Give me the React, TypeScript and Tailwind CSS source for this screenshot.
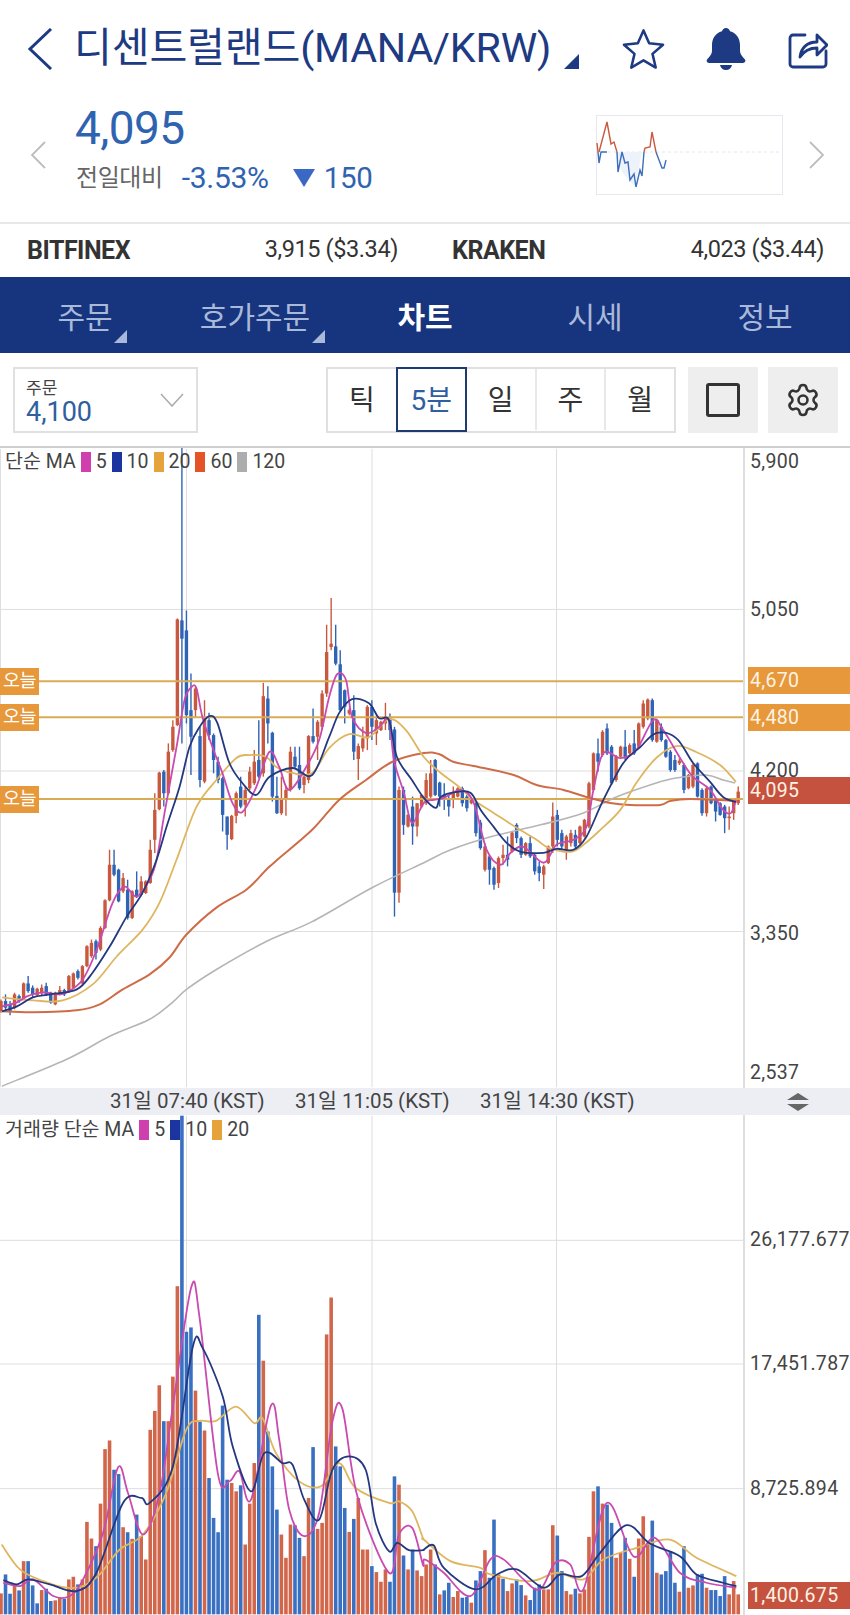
import { Settings } from 'lucide-react'

const KR = "font-['Roboto','Noto_Sans_CJK_KR',sans-serif]"

const CANDLE_UP = '#c9593e'
const CANDLE_DOWN = '#2f63b6'

// [up, bodyTop, bodyBottom, wickTop, wickBottom], y read off the chart
type Row = [number, number, number, number?, number?]

const rowsA: Row[] = [
  [1, 425, 455, 420, 460], [0, 425, 445, 405, 455], [0, 435, 455, 425, 468], [1, 405, 445, 400, 450],
  [0, 410, 425, 405, 430], [1, 372, 418], [0, 372, 395, 350, 400], [0, 385, 405, 378, 415],
  [1, 388, 408], [1, 385, 402, 375, 408], [0, 380, 405, 370, 410], [0, 400, 430],
  [1, 400, 435], [1, 392, 402, 380, 408], [0, 392, 405, 388, 410], [1, 350, 398],
  [1, 342, 385], [0, 335, 355, 330, 360], [1, 320, 372], [1, 260, 320],
  [1, 250, 290, 240, 295], [0, 245, 280, 240, 300], [1, 205, 270, 200, 275], [1, 122, 205],
  [1, 15, 122, -30, 125], [0, 15, 45, -30, 50], [0, 30, 125], [1, 55, 95, 40, 100],
  [0, 90, 175, 60, 180], [1, 95, 175], [0, 90, 112, 35, 115], [1, 65, 105, 50, 110],
  [1, 65, 100], [1, -30, 70, -60, 72],
]

const rowsB: Row[] = [
  [1, 750, 840, 700, 880], [1, 638, 748], [0, 635, 700, 630, 740], [1, 575, 700, 550, 705],
  [1, 500, 570, 480, 575], [1, 177, 495], [0, 180, 235, -342, 550], [0, 210, 465, 150, 490],
  [0, 450, 530, 340, 645], [1, 385, 450, 380, 470], [0, 528, 660, 500, 682], [1, 475, 665, 420, 670],
  [0, 480, 525, 458, 540], [0, 525, 600, 520, 640], [0, 605, 660, 590, 670], [0, 655, 765, 650, 815],
  [0, 770, 825, 770, 870], [1, 768, 838], [1, 700, 768, 695, 790], [0, 680, 740, 650, 745],
  [1, 690, 735, 680, 770], [1, 635, 685, 620, 690], [1, 605, 670, 570, 675], [0, 600, 650, 480, 655],
  [1, 408, 640, 368, 650], [0, 415, 490, 378, 550], [0, 518, 710, 515, 725], [0, 708, 760, 650, 762],
  [1, 720, 760, 650, 765], [1, 690, 720, 680, 768], [1, 575, 690, 560, 695], [0, 590, 620, 560, 625],
  [0, 615, 685, 560, 690], [1, 650, 675, 640, 700], [1, 528, 660, 525, 670], [0, 528, 545, 445, 550],
  [1, 485, 530, 480, 600], [1, 400, 500, 390, 510], [1, 275, 400, 193, 410], [1, 250, 260, 113, 270],
  [0, 258, 310, 193, 315], [0, 312, 450, 270, 455], [0, 390, 440, 388, 490], [1, 450, 460, 445, 465],
  [0, 450, 575, 405, 600], [1, 558, 597, 550, 660], [1, 535, 565, 500, 575], [1, 440, 535, 435, 570],
  [0, 440, 500, 420, 540], [1, 480, 520, 470, 555], [1, 485, 510], [1, 470, 490, 428, 510],
  [0, 470, 510, 460, 540], [0, 508, 999, 500, 1071], [1, 690, 999, 680, 1029], [0, 690, 795, 680, 825],
  [1, 765, 800], [0, 740, 800, 710, 855], [1, 730, 800, 730, 830], [1, 705, 740, 705, 745],
]

const rowsC: Row[] = [
  [1, 420, 490, 400, 495], [1, 400, 470, 360, 475], [0, 360, 465], [0, 428, 470, 425, 500],
  [0, 465, 480, 430, 510], [0, 475, 500, 465, 530], [1, 455, 480, 440, 505], [1, 445, 470],
  [0, 445, 490, 440, 500], [0, 470, 505, 465, 515], [1, 478, 490], [0, 490, 580, 485, 590],
  [0, 548, 625, 540, 630], [1, 620, 690, 610, 695], [0, 650, 690, 645, 735], [0, 685, 735, 680, 750],
  [1, 655, 730, 650, 745], [1, 645, 655, 615, 675], [0, 645, 660, 590, 680], [1, 578, 635],
  [0, 555, 595, 550, 610], [0, 595, 645, 590, 655], [1, 610, 645], [0, 610, 650, 590, 655],
  [0, 645, 695, 640, 705], [0, 680, 700, 665, 725], [1, 680, 705, 675, 748], [1, 620, 670],
  [1, 530, 620, 488, 640], [0, 525, 600, 510, 620], [0, 580, 620, 570, 630], [1, 590, 630, 585, 660],
  [1, 580, 610, 570, 620], [0, 585, 620, 570, 625], [1, 560, 610], [1, 540, 590],
  [1, 430, 560, 425, 565], [1, 340, 450], [0, 340, 365, 295, 395], [1, 275, 345, 270, 350],
  [0, 265, 340, 250, 345], [0, 320, 430, 315, 435], [1, 350, 420, 345, 425], [1, 320, 350],
  [0, 320, 355, 270, 360], [1, 315, 340, 310, 345], [0, 310, 340, 270, 345], [1, 250, 320],
  [1, 190, 260, 180, 265], [1, 178, 235, 175, 240], [0, 180, 300, 175, 305], [1, 240, 305],
  [0, 260, 300, 250, 305], [0, 300, 350], [0, 335, 390, 330, 395], [0, 360, 390, 345, 395],
  [1, 362, 370, 355, 375], [0, 375, 450, 370, 460], [1, 405, 445], [1, 375, 440, 370, 445],
  [0, 370, 470], [0, 450, 520, 445, 528], [1, 445, 520, 440, 530], [0, 440, 490],
  [0, 480, 515, 475, 545], [0, 490, 525], [0, 500, 535, 495, 580], [1, 530, 535, 500, 570],
  [1, 485, 520, 480, 540], [1, 455, 490, 440, 495],
]

const toPage = (y0: number, rows: Row[]) =>
  rows.map(([up, bt, bb, wt, wb]) => ({
    up,
    top: y0 + bt / 3,
    bottom: y0 + bb / 3,
    high: y0 + (wt ?? bt - 3) / 3,
    low: y0 + (wb ?? bb + 3) / 3,
  }))

const candles = [...toPage(860, rowsA), ...toPage(560, rowsB), ...toPage(640, rowsC)]

const volUp = [1, 0, 0, 1, 0, 1, 0, 0, 0, 1, 0, 0, 1, 1, 0, 1, 1, 0, 1, 1, 1, 0, 1, 1, 1, 0, 0, 1, 0, 1, 0, 1, 1, 1, 1, 1, 0, 1, 1, 1, 0, 0, 0, 1, 0, 1, 0, 0, 0, 0, 0, 1, 1, 0, 1, 1, 1, 0, 1, 0, 0, 0, 1, 1, 1, 0, 0, 1, 1, 0, 1, 1, 1, 1, 0, 0, 0, 1, 0, 1, 1, 1, 0, 1, 1, 1, 0, 0, 1, 0, 1, 0, 1, 1]
const volTop = [1062, 1005, 1063, 1040, 1053, 965, 965, 1038, 1092, 1052, 1048, 1085, 1083, 1075, 1078, 1020, 1012, 1035, 1020, 847, 897, 920, 792, 628, 602, 690, 703, 863, 878, 898, 825, 890, 960, 570, 513, 436, 544, 544, 410, 138, -375, 275, 262, 452, 545, 572, 715, 835, 878, 497, 720, 730, 755, 737, 915, 792, 670, 224, 362, 575, 680, 810, 885, 955, 855, 857, 895, 950, 775, 622, 868, 850, 283, 172, 620, 680, 805, 877, 838, 775, 930, 930, 980, 998, 1027, 990, 1027, 710, 735, 948, 990, 930, 993, 1010]
const volUpB = [1, 1, 0, 1, 0, 0, 1, 1, 0, 0, 1, 0, 0, 1, 0, 0, 1, 0, 1, 1, 0, 0, 1, 0, 0, 0, 1, 1, 1, 0, 0, 1, 1, 0, 1, 1, 1, 1, 0, 1, 0, 0, 1, 1, 0, 1, 0, 1, 1, 1, 0, 1, 0, 0, 0, 0, 1, 0, 1, 1, 0, 0, 1, 0, 0, 0, 0, 1, 1, 1]
const volTopB = [975, 930, 975, 1065, 1053, 1030, 1073, 1055, 1075, 1073, 1090, 1023, 995, 932, 1015, 840, 1005, 1018, 1055, 1032, 1020, 1037, 1068, 1082, 1045, 1035, 1050, 1050, 857, 888, 995, 1055, 1065, 1048, 1062, 1050, 892, 755, 740, 792, 795, 850, 955, 940, 895, 958, 1012, 897, 830, 910, 843, 1000, 1005, 995, 935, 1030, 1057, 920, 1045, 1038, 1005, 1003, 1045, 1052, 1052, 1070, 1010, 1065, 1025, 1065]

const volumes = [
  ...volTop.map((t, i) => ({ up: volUp[i], top: 1240 + t / 3 })),
  ...volTopB.map((t, i) => ({ up: volUpB[i], top: 1240 + t / 3 })),
]

const X = (i: number) => 1 + 4.535 * i

// catmull-rom through the read-off points so the averages don't look kinked
function smooth(p: number[][]) {
  let d = `M${p[0][0]} ${p[0][1]}`
  for (let i = 0; i < p.length - 1; i++) {
    const a = p[Math.max(i - 1, 0)]
    const b = p[i]
    const c = p[i + 1]
    const e = p[Math.min(i + 2, p.length - 1)]
    const c1x = b[0] + (c[0] - a[0]) / 6
    const c1y = b[1] + (c[1] - a[1]) / 6
    const c2x = c[0] - (e[0] - b[0]) / 6
    const c2y = c[1] - (e[1] - b[1]) / 6
    d += ` C${c1x.toFixed(1)} ${c1y.toFixed(1)} ${c2x.toFixed(1)} ${c2y.toFixed(1)} ${c[0]} ${c[1]}`
  }
  return d
}

const ma120 = [[2, 1087], [67, 1060], [110, 1037], [150, 1020], [173, 1003], [187, 990], [217, 970], [267, 942], [313, 922], [373, 888], [425, 863], [452, 850], [492, 837], [542, 825], [585, 813], [618, 797], [658, 783], [678, 778], [708, 775], [725, 780], [737, 783]]
const ma60 = [[2, 1012], [33, 1013], [77, 1011], [100, 1005], [123, 990], [150, 975], [170, 958], [187, 935], [217, 908], [247, 890], [267, 870], [278, 860], [313, 830], [340, 800], [367, 780], [393, 762], [425, 753], [440, 754], [455, 762], [475, 766], [515, 775], [538, 785], [565, 790], [588, 797], [612, 803], [632, 805], [662, 805], [672, 801], [692, 799], [738, 801]]
const ma20 = [[2, 998], [33, 1001], [63, 1001], [93, 985], [117, 957], [143, 930], [160, 903], [177, 860], [197, 807], [217, 780], [237, 758], [250, 755], [267, 757], [277, 767], [293, 773], [313, 773], [330, 748], [350, 734], [370, 737], [390, 719], [407, 730], [425, 757], [442, 773], [458, 785], [475, 800], [495, 813], [518, 828], [538, 840], [550, 848], [572, 852], [585, 845], [602, 830], [622, 810], [638, 783], [658, 758], [678, 746], [698, 752], [722, 765], [738, 782]]
const ma10 = [[2, 1012], [17, 1007], [33, 998], [50, 995], [77, 990], [93, 973], [110, 947], [127, 917], [143, 893], [157, 860], [167, 827], [180, 787], [190, 747], [200, 727], [210, 716], [218, 723], [230, 763], [243, 783], [257, 795], [270, 777], [293, 768], [313, 775], [330, 737], [340, 713], [353, 699], [370, 703], [380, 718], [390, 720], [398, 757], [413, 780], [425, 798], [437, 808], [442, 797], [458, 792], [472, 793], [482, 810], [495, 827], [508, 843], [522, 852], [545, 853], [558, 849], [575, 850], [588, 837], [605, 800], [625, 763], [642, 747], [658, 733], [678, 738], [695, 763], [712, 782], [725, 797], [738, 802]]
const ma5 = [[2, 1007], [17, 1003], [27, 997], [43, 993], [57, 995], [67, 993], [83, 980], [97, 950], [113, 903], [125, 887], [137, 897], [150, 880], [157, 860], [165, 813], [177, 747], [185, 700], [192, 687], [197, 688], [203, 717], [213, 747], [223, 773], [233, 803], [243, 812], [257, 787], [270, 752], [280, 767], [290, 790], [307, 767], [320, 740], [330, 697], [338, 674], [347, 680], [353, 717], [367, 733], [380, 727], [390, 720], [395, 760], [405, 793], [413, 823], [425, 803], [435, 800], [445, 798], [462, 790], [475, 803], [488, 850], [502, 865], [512, 853], [525, 847], [545, 863], [558, 845], [575, 840], [588, 827], [595, 790], [605, 753], [622, 758], [638, 750], [655, 720], [665, 730], [685, 763], [695, 777], [712, 790], [725, 810], [733, 813], [738, 800]]

const volLine = (left: number[][], right: number[][]) => [
  ...left.map(([x, y]) => [x / 3, 1240 + y / 3]),
  ...right.map(([x, y]) => [425 + x / 3, 1240 + y / 3]),
]

const vma20 = volLine(
  [[5, 915], [60, 990], [130, 1025], [200, 1045], [250, 1040], [300, 1005], [360, 930], [430, 885], [500, 760], [560, 570], [600, 543], [650, 543], [710, 500], [765, 550], [790, 535], [830, 640], [900, 725], [965, 740], [1020, 670], [1070, 745], [1170, 790], [1200, 785], [1240, 815], [1272, 895]],
  [[0, 900], [80, 965], [170, 985], [200, 1005], [320, 1025], [400, 1000], [480, 1020], [540, 960], [640, 925], [740, 900], [820, 955], [940, 1010]],
)
const vma10 = volLine(
  [[10, 1022], [50, 1035], [85, 1020], [150, 1035], [230, 1055], [290, 1000], [370, 790], [425, 775], [450, 790], [520, 680], [580, 320], [610, 325], [670, 470], [700, 620], [755, 755], [795, 640], [850, 670], [880, 675], [915, 780], [960, 840], [1000, 690], [1050, 650], [1100, 690], [1130, 850], [1170, 935], [1195, 910], [1230, 932], [1272, 932]],
  [[0, 930], [30, 918], [60, 985], [155, 1050], [220, 1005], [280, 990], [360, 1045], [410, 1005], [475, 1010], [530, 940], [610, 857], [680, 912], [770, 950], [820, 1005], [900, 1030], [940, 1040]],
)
const vma5 = volLine(
  [[10, 1030], [60, 1040], [100, 1020], [160, 1070], [210, 1070], [250, 1020], [310, 880], [355, 683], [385, 760], [430, 885], [480, 760], [520, 500], [575, 142], [600, 230], [655, 700], [690, 725], [720, 695], [755, 780], [815, 497], [840, 600], [870, 810], [915, 890], [960, 820], [1000, 545], [1030, 507], [1075, 770], [1170, 1000], [1200, 885], [1240, 865], [1272, 975]],
  [[0, 960], [20, 970], [60, 1000], [140, 1070], [200, 960], [240, 960], [300, 1020], [350, 1050], [395, 970], [440, 975], [480, 1050], [550, 790], [630, 950], [695, 895], [770, 1000], [850, 1030], [940, 1045]],
)

function Grid({ rows, y0, y1 }: { rows: number[]; y0: number; y1: number }) {
  return (
    <g stroke="#dedede" strokeWidth="1">
      {rows.map((y) => (
        <line key={y} x1="0" x2="745" y1={y} y2={y} />
      ))}
      {[187, 373, 558].map((x) => (
        <line key={x} x1={x} x2={x} y1={y0} y2={y1} />
      ))}
    </g>
  )
}

function Line({ points, color, width = 1.8 }: { points: number[][]; color: string; width?: number }) {
  return <path d={smooth(points)} fill="none" stroke={color} strokeWidth={width} strokeLinejoin="round" />
}

function TodayLine({ y }: { y: number }) {
  return <line x1="0" x2="745" y1={y} y2={y} stroke="#d9ab55" strokeWidth="2" />
}

function LegendItem({ color, label }: { color: string; label: string }) {
  return (
    <div className="flex items-center gap-[5px]">
      <span className="h-[20px] w-[10px]" style={{ backgroundColor: color }} />
      <span>{label}</span>
    </div>
  )
}

function PriceTag({ top, bg, label }: { top: number; bg: string; label: string }) {
  return (
    <div
      className="absolute left-[3px] w-[102px] pl-[2px] text-[19.5px] leading-[27px] tracking-[0.3px] text-[#fdf3e4]"
      style={{ top, backgroundColor: bg }}
    >
      {label}
    </div>
  )
}

function TodayTag({ top }: { top: number }) {
  return (
    <div className="absolute left-0 flex h-[27px] w-[39px] items-center justify-center bg-[#e6983b] text-[18.5px] tracking-[-0.5px] text-white" style={{ top }}>
      오늘
    </div>
  )
}

function AxisLabel({ top, label }: { top: number; label: string }) {
  return (
    <div className="absolute left-[5px] text-[19.5px] leading-[24px] tracking-[0.3px] whitespace-nowrap text-[#444]" style={{ top }}>
      {label}
    </div>
  )
}

export default function App() {
  return (
    <div className={`${KR} h-[1615px] w-[850px] overflow-hidden bg-white`}>
      {/* title */}
      <div className="flex h-[100px] items-center pb-[2px] text-[#1d3a82]">
        <svg className="ml-[27px] h-[42px] w-[26px]" viewBox="0 0 26 42" fill="none" stroke="currentColor" strokeWidth="3">
          <polyline points="24,1 3,21 24,41" />
        </svg>
        <span className="ml-[21px] text-[41.200px] leading-none tracking-[-0.2px] whitespace-nowrap">디센트럴랜드(MANA/KRW)</span>
        <svg className="mt-[24px] ml-[13px] h-[15px] w-[15px]" viewBox="0 0 15 15">
          <polygon points="15,0 15,15 0,15" fill="currentColor" />
        </svg>
        <svg className="ml-[43px] h-[42px] w-[43px]" viewBox="0 0 44 42" fill="none" stroke="currentColor" strokeWidth="2.6" strokeLinejoin="round">
          <polygon points="22,2 27.8,15.2 42,16.6 31.2,26 34.5,40 22,32.6 9.5,40 12.8,26 2,16.6 16.2,15.2" />
        </svg>
        <svg className="ml-[41px] h-[42px] w-[40px]" viewBox="0 0 40 42" fill="currentColor">
          <path d="M20 0c2 0 3.6 1.400 4 3.200C30.600 5 34 10.600 34 17v6c0 3.400 2.400 5.600 4.600 8 1.600 1.800.6 4-1.800 4H3.200c-2.400 0-3.400-2.200-1.800-4C3.600 28.600 6 26.400 6 23v-6C6 10.600 9.400 5 16 3.200 16.400 1.400 18 0 20 0z" />
          <path d="M14 37h12c-.6 3-3 5-6 5s-5.400-2-6-5z" />
        </svg>
        <svg className="ml-[42px] h-[42px] w-[40px]" viewBox="0 0 40 42" fill="none" stroke="currentColor" strokeWidth="2.8" strokeLinejoin="round" strokeLinecap="round">
          <path d="M17 7H5a3 3 0 0 0-3 3v26a3 3 0 0 0 3 3h30a3 3 0 0 0 3-3V23" />
          <path d="M12 29c1-9 7-15 17-15V7l10 10-10 10v-7c-7 0-13 3-17 9z" />
        </svg>
      </div>

      {/* price */}
      <div className="flex h-[124px] items-center border-b-2 border-[#e8e8e8]">
        <svg className="-mt-[12px] ml-[30px] h-[28px] w-[16px]" viewBox="0 0 16 28" fill="none" stroke="#bdbdbd" strokeWidth="1.8">
          <polyline points="15,1 2,14 15,27" />
        </svg>
        <div className="mt-[2px] ml-[29px] flex flex-col self-start">
          <div className="text-[46px] leading-[52px] tracking-[-0.6px] text-[#2f63b0]">4,095</div>
          <div className="mt-[9px] flex items-center">
            <span className="ml-[1px] text-[24px] leading-[30px] tracking-[-0.4px] text-[#666]">전일대비</span>
            <span className="ml-[19px] text-[30px] leading-[30px] tracking-[-0.3px] text-[#2f63b0]">-3.53%</span>
            <svg className="ml-[24px] h-[18px] w-[22px]" viewBox="0 0 22 18">
              <polygon points="0,0 22,0 11,18" fill="#3a68c4" />
            </svg>
            <span className="ml-[9px] text-[29.500px] leading-[30px] tracking-[-0.3px] text-[#2f63b0]">150</span>
          </div>
        </div>
        <svg className="mt-[15px] ml-auto h-[80px] w-[187px] self-start" viewBox="596 115 187 80">
          <rect x="596.500" y="115.500" width="186" height="79" fill="none" stroke="#e6e8ee" />
          <line x1="596" x2="782" y1="152" y2="152" stroke="#e3e6ee" strokeDasharray="3 3" />
          <polygon points="600,152 615,152 622,172 635,187 642,152" fill="#eef2fa" />
          <polyline points="597,143 598,152" fill="none" stroke="#c9593e" strokeWidth="1.4" />
          <polyline points="598,152 599,163 601,152 606,152 607,152" fill="none" stroke="#3d6fbb" strokeWidth="1.4" />
          <polyline points="599,152 607,122 611,144 614,142 617,152" fill="none" stroke="#c9593e" strokeWidth="1.4" />
          <polyline points="617,152 618,172 622,152 625,163 628,162 630,180 634,174 636,187 640,170 642,176 644,152" fill="none" stroke="#3d6fbb" strokeWidth="1.4" />
          <polyline points="644,152 645,148 650,147 652,132 656,152" fill="none" stroke="#c9593e" strokeWidth="1.4" />
          <polyline points="656,152 662,168 664,168 666,160" fill="none" stroke="#3d6fbb" strokeWidth="1.4" />
        </svg>
        <svg className="-mt-[12px] mr-[25px] ml-[26px] h-[28px] w-[16px]" viewBox="0 0 16 28" fill="none" stroke="#bdbdbd" strokeWidth="1.8">
          <polyline points="1,1 14,14 1,27" />
        </svg>
      </div>

      {/* exchanges */}
      <div className="flex h-[53px] items-center pr-[26px] pl-[27px] text-[23.500px] tracking-[-0.4px] text-[#333]">
        <div className="flex w-[371px] justify-between">
          <span className="text-[25px] font-bold tracking-[-0.5px]">BITFINEX</span>
          <span>3,915 ($3.34)</span>
        </div>
        <div className="ml-[54px] flex flex-1 justify-between">
          <span className="text-[25px] font-bold tracking-[-0.5px]">KRAKEN</span>
          <span>4,023 ($3.44)</span>
        </div>
      </div>

      {/* tabs */}
      <div className="grid h-[76px] grid-cols-5 bg-[#17347f] text-[30px] text-[#a9b9d9]">
        <div className="relative flex items-center justify-center pt-[5px]">
          주문
          <span className="absolute top-[53px] left-[114px] h-0 w-0 border-b-[13px] border-l-[13px] border-b-[#a9b9d9] border-l-transparent" />
        </div>
        <div className="relative flex items-center justify-center pt-[5px]">
          호가주문
          <span className="absolute top-[53px] left-[142px] h-0 w-0 border-b-[13px] border-l-[13px] border-b-[#a9b9d9] border-l-transparent" />
        </div>
        <div className="flex items-center justify-center pt-[5px] font-bold text-white">차트</div>
        <div className="flex items-center justify-center pt-[5px]">시세</div>
        <div className="flex items-center justify-center pt-[5px]">정보</div>
      </div>

      {/* toolbar */}
      <div className="flex h-[95px] items-start border-b-2 border-[#cfcfcf] pt-[14px] pl-[13px]">
        <div className="flex h-[66px] w-[185px] items-center justify-between border-2 border-[#e0e0e0] pr-[12px] pl-[11px]">
          <div className="flex flex-col pt-[4px]">
            <span className="text-[17px] leading-[20px] text-[#444]">주문</span>
            <span className="text-[27px] leading-[28px] text-[#2f5f9f]">4,100</span>
          </div>
          <svg className="h-[14px] w-[24px]" viewBox="0 0 24 14" fill="none" stroke="#aaa" strokeWidth="1.5">
            <polyline points="1,1 12,13 23,1" />
          </svg>
        </div>
        <div className="ml-[128px] flex h-[66px] w-[350px] border-2 border-[#e0e0e0] pb-[1px] text-[28px] text-[#333]">
          <div className="flex flex-1 items-center justify-center pt-[3px]">틱</div>
          <div className="-my-[2px] flex w-[71px] items-center justify-center border-2 border-[#1f3a6e] pt-[3px] text-[#2f5f9f]">5분</div>
          <div className="flex flex-1 items-center justify-center border-r-2 border-[#e8e8e8] pt-[3px]">일</div>
          <div className="flex flex-1 items-center justify-center border-r-2 border-[#e8e8e8] pt-[3px]">주</div>
          <div className="flex flex-1 items-center justify-center pt-[3px]">월</div>
        </div>
        <div className="ml-[12px] flex h-[66px] w-[70px] items-center justify-center bg-[#eeeeee]">
          <div className="h-[34px] w-[34px] rounded-[3px] border-[3px] border-[#333]" />
        </div>
        <div className="ml-[10px] flex h-[66px] w-[70px] items-center justify-center bg-[#eeeeee] text-[#333]">
          <Settings size={36} strokeWidth={1.7} />
        </div>
      </div>

      {/* price pane */}
      <div className="relative flex h-[640px] text-[19.500px] text-[#444]">
        <svg className="h-[640px] w-[745px] border-r-2 border-[#dedede]" viewBox="0 448 745 640">
          <Grid rows={[609, 771, 932]} y0={448} y1={1088} />
          <line x1="0.500" x2="0.500" y1="448" y2="1088" stroke="#dedede" />
          {candles.map((c, i) => (
            <g key={i} stroke={c.up ? CANDLE_UP : CANDLE_DOWN} fill={c.up ? CANDLE_UP : CANDLE_DOWN}>
              <line x1={X(i)} x2={X(i)} y1={c.high} y2={c.low} strokeWidth="1.4" />
              <rect x={X(i) - 1.7} y={c.top} width="3.4" height={c.bottom - c.top} stroke="none" />
            </g>
          ))}
          <TodayLine y={681} />
          <TodayLine y={717} />
          <TodayLine y={799} />
          <Line points={ma120} color="#b5b5b5" width={1.6} />
          <Line points={ma60} color="#cf6c48" width={2} />
          <Line points={ma20} color="#dfb660" />
          <Line points={ma5} color="#c94ab0" />
          <Line points={ma10} color="#24387f" />
        </svg>
        <div className="absolute top-[2px] left-[5px] flex items-center gap-[5px] leading-[24px]">
          <span>단순 MA</span>
          <LegendItem color="#d03fae" label="5" />
          <LegendItem color="#1b34a0" label="10" />
          <LegendItem color="#e6a33c" label="20" />
          <LegendItem color="#e55328" label="60" />
          <LegendItem color="#adadad" label="120" />
        </div>
        <TodayTag top={220} />
        <TodayTag top={256} />
        <TodayTag top={338} />
        <div className="relative flex-1">
          <AxisLabel top={2} label="5,900" />
          <AxisLabel top={150} label="5,050" />
          <AxisLabel top={311} label="4,200" />
          <AxisLabel top={474} label="3,350" />
          <AxisLabel top={613} label="2,537" />
          <PriceTag top={219} bg="#e6983b" label="4,670" />
          <PriceTag top={256} bg="#e6983b" label="4,480" />
          <PriceTag top={337} bg="#e6983b" label="" />
          <PriceTag top={329} bg="#c5523f" label="4,095" />
        </div>
      </div>

      {/* time axis */}
      <div className="relative h-[27px] bg-[#eceef3] text-[20.500px] leading-[27px] text-[#444]">
        <span className="absolute left-[110px] whitespace-nowrap">31일 07:40 (KST)</span>
        <span className="absolute left-[295px] whitespace-nowrap">31일 11:05 (KST)</span>
        <span className="absolute left-[480px] whitespace-nowrap">31일 14:30 (KST)</span>
        <svg className="absolute top-[5px] left-[787px] h-[18px] w-[22px]" viewBox="0 0 22 18" fill="#666">
          <polygon points="11,0 22,7 0,7" />
          <polygon points="0,11 22,11 11,18" />
        </svg>
      </div>

      {/* volume pane */}
      <div className="relative flex h-[500px] text-[19.500px] text-[#444]">
        <svg className="h-[500px] w-[745px] border-r-2 border-[#dedede]" viewBox="0 1115 745 500">
          <Grid rows={[1240, 1364, 1489]} y0={1115} y1={1615} />
          {volumes.map((v, i) => (
            <rect key={i} x={X(i) - 1.8} y={v.top} width="3.6" height={1615 - v.top} fill={v.up ? '#d2664b' : '#3a70c2'} />
          ))}
          <Line points={vma20} color="#dfb660" />
          <Line points={vma5} color="#c94ab0" />
          <Line points={vma10} color="#24387f" />
        </svg>
        <div className="absolute top-[3px] left-[5px] flex items-center gap-[5px] leading-[24px]">
          <span>거래량 단순 MA</span>
          <LegendItem color="#d03fae" label="5" />
          <LegendItem color="#1b34a0" label="10" />
          <LegendItem color="#e6a33c" label="20" />
        </div>
        <div className="relative flex-1">
          <AxisLabel top={113} label="26,177.677" />
          <AxisLabel top={237} label="17,451.787" />
          <AxisLabel top={362} label="8,725.894" />
          <PriceTag top={467} bg="#c5523f" label="1,400.675" />
        </div>
      </div>
    </div>
  )
}
